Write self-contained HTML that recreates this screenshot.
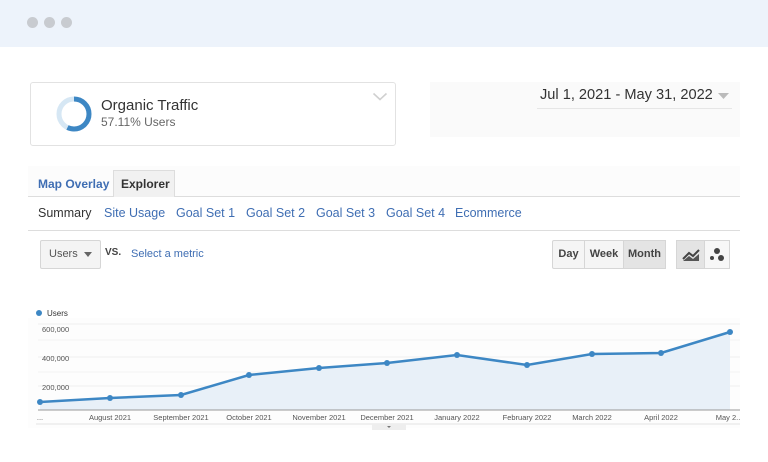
<!DOCTYPE html>
<html><head><meta charset="utf-8"><style>
*{margin:0;padding:0;box-sizing:border-box}
body{width:768px;height:462px;background:#fff;font-family:"Liberation Sans",Arial,sans-serif;position:relative;overflow:hidden}
.abs{position:absolute}
.top{left:0;top:0;width:768px;height:47px;background:#edf3fb}
.dot{width:11px;height:11px;border-radius:50%;background:#c8cbd0;top:17px}
.card{left:30px;top:82px;width:366px;height:64px;border:1px solid #e2e2e2;border-radius:3px;background:#fff}
.link{color:#3f6eb3}
.btn{border:1px solid #d6d6d6;background:#f3f3f3;font-size:11px;font-weight:bold;color:#444;text-align:center;line-height:27px;height:29px}
</style></head><body>
<div class="abs top"></div>
<div class="abs dot" style="left:27px"></div>
<div class="abs dot" style="left:44px"></div>
<div class="abs dot" style="left:61px"></div>

<div class="abs card"></div>
<svg class="abs" style="left:55px;top:95px" width="38" height="38" viewBox="0 0 38 38">
<circle cx="19" cy="19" r="15" fill="none" stroke="#d6e7f4" stroke-width="5"/>
<circle cx="19" cy="19" r="15" fill="none" stroke="#3d87c4" stroke-width="5" stroke-dasharray="53.8 94.2" transform="rotate(-90 19 19)"/>
</svg>
<div class="abs" style="left:101px;top:97px;font-size:15px;color:#333">Organic Traffic</div>
<div class="abs" style="left:101px;top:115px;font-size:12px;color:#666">57.11% Users</div>
<svg class="abs" style="left:372px;top:92px" width="16" height="10"><path d="M1.5 1.5 L8 7.5 L14.5 1.5" fill="none" stroke="#d0d0d0" stroke-width="1.6"/></svg>

<div class="abs" style="left:430px;top:82px;width:310px;height:55px;background:#fafafa"></div>
<div class="abs" style="left:540px;top:87px;font-size:14.6px;color:#333">Jul 1, 2021 - May 31, 2022</div>
<svg class="abs" style="left:718px;top:93px" width="11" height="6"><path d="M0 0H11L5.5 6Z" fill="#bbb"/></svg>
<div class="abs" style="left:537px;top:108px;width:195px;height:1px;background:#e6e6e6"></div>

<div class="abs" style="left:28px;top:166px;width:712px;height:30px;background:#fcfcfc"></div>
<div class="abs" style="left:28px;top:196px;width:712px;height:1px;background:#ddd"></div>
<div class="abs" style="left:113px;top:170px;width:62px;height:27px;background:#f1f1f1;border:1px solid #ddd;border-bottom:none"></div>
<div class="abs link" style="left:38px;top:177px;font-size:12px;font-weight:bold">Map Overlay</div>
<div class="abs" style="left:121px;top:177px;font-size:12px;font-weight:bold;color:#333">Explorer</div>

<div class="abs" style="left:38px;top:206px;font-size:12.5px;color:#333">Summary</div>
<div class="abs link" style="left:104px;top:206px;font-size:12.5px">Site Usage</div>
<div class="abs link" style="left:176px;top:206px;font-size:12.5px">Goal Set 1</div>
<div class="abs link" style="left:246px;top:206px;font-size:12.5px">Goal Set 2</div>
<div class="abs link" style="left:316px;top:206px;font-size:12.5px">Goal Set 3</div>
<div class="abs link" style="left:386px;top:206px;font-size:12.5px">Goal Set 4</div>
<div class="abs link" style="left:455px;top:206px;font-size:12.5px">Ecommerce</div>
<div class="abs" style="left:28px;top:230px;width:712px;height:1px;background:#ddd"></div>

<div class="abs" style="left:40px;top:240px;width:61px;height:29px;border:1px solid #d6d6d6;background:#f4f4f4;border-radius:2px"></div>
<div class="abs" style="left:49px;top:248px;font-size:11px;color:#555">Users</div>
<svg class="abs" style="left:84px;top:252px" width="8" height="5"><path d="M0 0H8L4 5Z" fill="#666"/></svg>
<div class="abs" style="left:105px;top:247px;font-size:10px;font-weight:bold;color:#444">VS.</div>
<div class="abs link" style="left:131px;top:248px;font-size:11px">Select a metric</div>

<div class="abs btn" style="left:552px;top:240px;width:33px;border-radius:2px 0 0 2px;background:#f5f5f5">Day</div>
<div class="abs btn" style="left:584px;top:240px;width:40px;background:#f5f5f5">Week</div>
<div class="abs btn" style="left:623px;top:240px;width:43px;background:#e4e4e4">Month</div>
<div class="abs btn" style="left:676px;top:240px;width:29px;background:#e4e4e4"></div>
<div class="abs btn" style="left:704px;top:240px;width:26px;background:#f7f7f7"></div>
<svg class="abs" style="left:681px;top:246px" width="20" height="16"><path d="M2 13 L8 7 L12 10 L18 4" fill="none" stroke="#444" stroke-width="2"/><path d="M2 15 L8 10 L12 13 L18 8 V15Z" fill="#555"/></svg>
<svg class="abs" style="left:707px;top:246px" width="20" height="18"><circle cx="10" cy="5" r="3" fill="#444"/><circle cx="5" cy="12" r="2" fill="#444"/><circle cx="14" cy="12" r="3" fill="#444"/></svg>

<svg class="abs" style="left:0;top:300px" width="768" height="140" viewBox="0 300 768 140">
<rect x="28" y="318" width="712" height="110" fill="#fdfdfd"/>
<line x1="38" y1="324" x2="740" y2="324" stroke="#eee"/>
<line x1="38" y1="340" x2="740" y2="340" stroke="#f4f4f4"/>
<line x1="38" y1="357" x2="740" y2="357" stroke="#eee"/>
<line x1="38" y1="372" x2="740" y2="372" stroke="#f4f4f4"/>
<line x1="38" y1="386" x2="740" y2="386" stroke="#eee"/>
<path d="M40 402 L110 398 L181 395 L249 375 L319 368 L387 363 L457 355 L527 365 L592 354 L661 353 L730 332 V410 H40Z" fill="#e8f0f8"/>
<path d="M40 402 L110 398 L181 395 L249 375 L319 368 L387 363 L457 355 L527 365 L592 354 L661 353 L730 332" fill="none" stroke="#3d87c4" stroke-width="2.5"/>
<g fill="#3d87c4"><circle cx="40" cy="402" r="3"/><circle cx="110" cy="398" r="3"/><circle cx="181" cy="395" r="3"/><circle cx="249" cy="375" r="3"/><circle cx="319" cy="368" r="3"/><circle cx="387" cy="363" r="3"/><circle cx="457" cy="355" r="3"/><circle cx="527" cy="365" r="3"/><circle cx="592" cy="354" r="3"/><circle cx="661" cy="353" r="3"/><circle cx="730" cy="332" r="3"/></g>
<line x1="38" y1="410" x2="740" y2="410" stroke="#999"/>
<line x1="36" y1="424" x2="740" y2="424" stroke="#e4e4e4"/>
<rect x="372" y="424" width="34" height="6" fill="#eee"/>
<path d="M387 426 H391 L389 428Z" fill="#777"/>
<circle cx="39" cy="313" r="3" fill="#3d87c4"/>
<g font-family="Liberation Sans,Arial,sans-serif" font-size="7.5" fill="#555">
<text x="47" y="316" font-size="8" fill="#333">Users</text>
<text x="42" y="332">600,000</text>
<text x="42" y="361">400,000</text>
<text x="42" y="390">200,000</text>
<g text-anchor="middle">
<text x="40" y="420">...</text><text x="110" y="420">August 2021</text><text x="181" y="420">September 2021</text><text x="249" y="420">October 2021</text><text x="319" y="420">November 2021</text><text x="387" y="420">December 2021</text><text x="457" y="420">January 2022</text><text x="527" y="420">February 2022</text><text x="592" y="420">March 2022</text><text x="661" y="420">April 2022</text><text x="728" y="420">May 2..</text>
</g></g>
</svg>
</body></html>
